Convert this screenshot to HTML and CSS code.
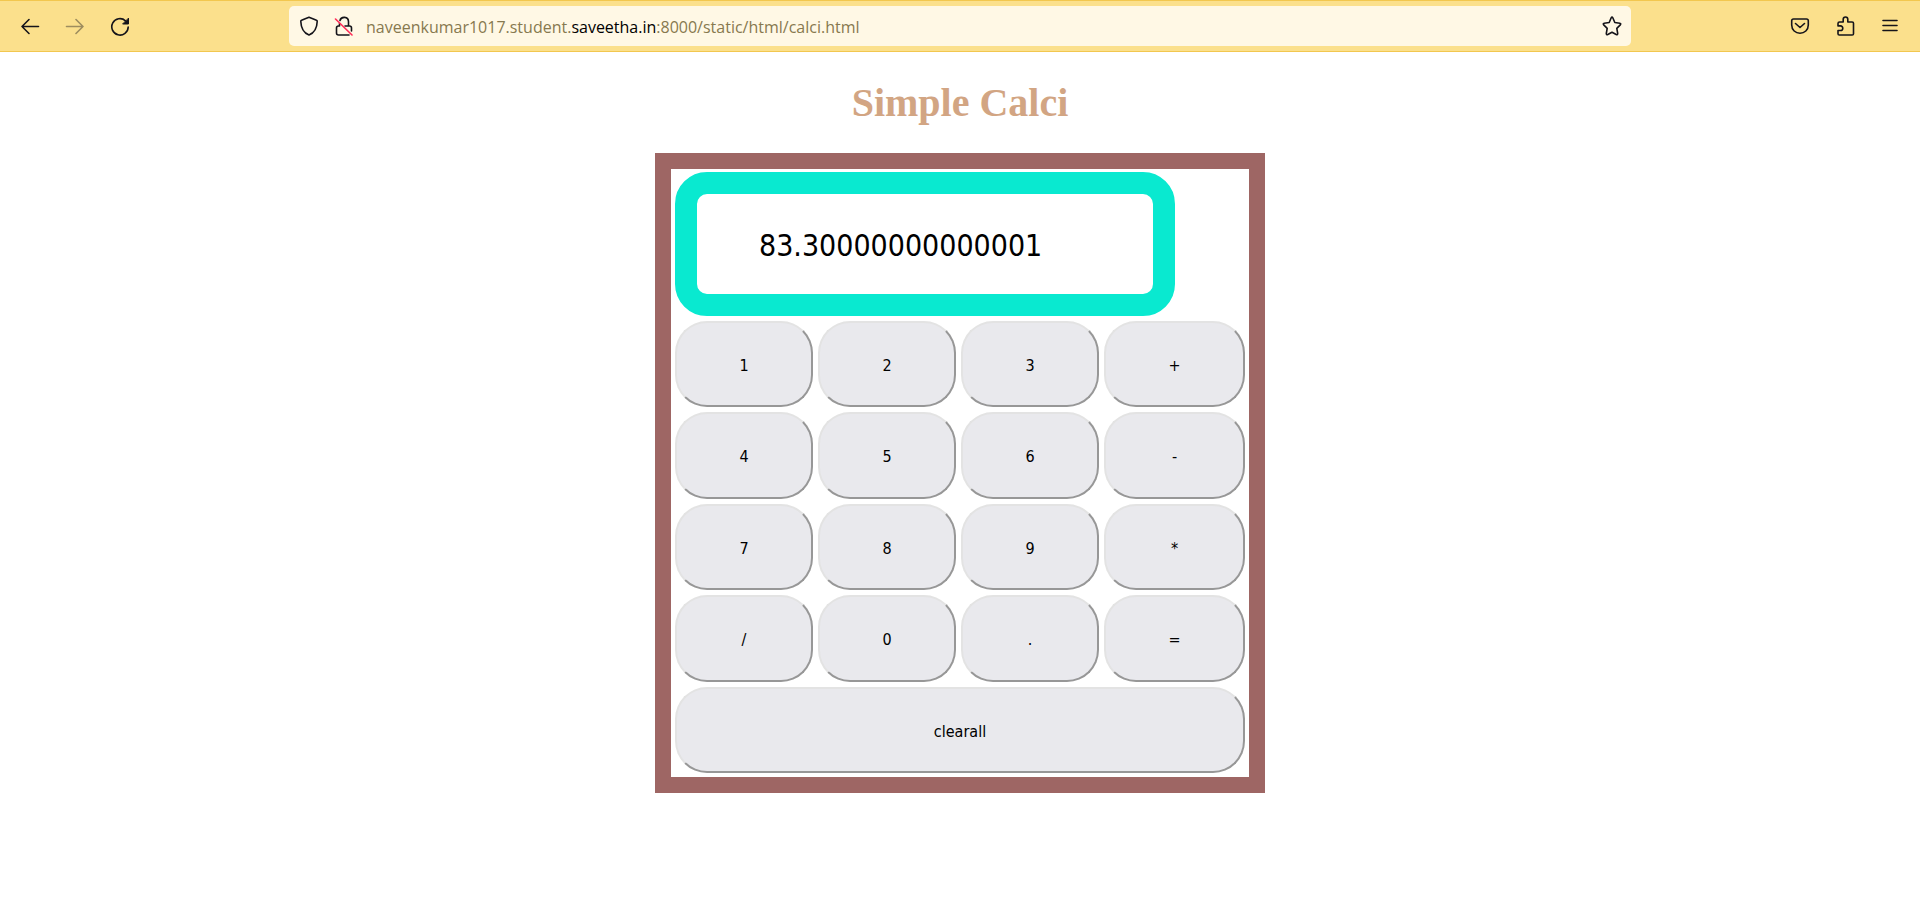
FILE: index.html
```html
<!DOCTYPE html>
<html lang="en">
<head>
<meta charset="utf-8">
<title>Simple Calci</title>
<link rel="stylesheet" href="styles.css">
</head>
<body>
<header class="toolbar">
  <nav class="nav" aria-label="Navigation">
    <button class="tool" type="button" aria-label="Back"><svg class="icon" viewBox="0 0 20 20"><path d="M18.500 10.500H2M9 3.500L2 10.500l7 7"/></svg></button>
    <button class="tool" type="button" aria-label="Forward" disabled><svg class="icon" viewBox="0 0 20 20"><path d="M1.500 10.500H18M11 3.500L18 10.500l-7 7"/></svg></button>
    <button class="tool" type="button" aria-label="Reload"><svg class="icon" viewBox="0 0 20 20"><path d="M18.200 11A8.200 8.200 0 1 1 15.500 4.800"/><path class="solid" d="M18.500 2.500V8H13Z"/></svg></button>
  </nav>
  <div class="address">
    <button class="tool" type="button" aria-label="Tracking protection"><svg class="icon" viewBox="0 0 20 20"><path d="M10 1.200L17.500 4.300Q18.300 4.600 18.200 5.500C18 12 15 17 10 19C5 17 2 12 1.800 5.500Q1.700 4.600 2.500 4.300Z"/></svg></button>
    <button class="tool" type="button" aria-label="Connection is not secure"><svg class="icon" viewBox="0 0 20 20"><path d="M6 4.500C7 .2 14.500 0 14.500 5.800V9.500M5.500 7.500V10H4.500Q2.500 10 2.500 12V17Q2.500 19 4.500 19H15M11 10H15.500Q17.500 10 17.500 12V15"/><path class="strike" d="M1.500 3L18 19"/></svg></button>
    <div class="url" role="textbox" aria-label="Address" contenteditable="true" spellcheck="false">naveenkumar1017.student.<span class="host">saveetha.in</span>:8000/static/html/calci.html</div>
    <button class="tool" type="button" aria-label="Bookmark"><svg class="icon" viewBox="0 0 20 20"><path d="M9.200 1.800Q10 .4 10.800 1.800L12.800 6.500L17.800 7.200Q19.400 7.600 18.300 8.900L14.800 12.400L15.700 17.500Q15.700 19.100 14.200 18.500L10 16.200L5.800 18.500Q4.300 19.100 4.300 17.500L5.200 12.400L1.700 8.900Q.6 7.600 2.200 7.200L7.200 6.500Z"/></svg></button>
  </div>
  <div class="actions">
    <button class="tool" type="button" aria-label="Save to Pocket"><svg class="icon" viewBox="0 0 20 20"><path d="M3.500 3H16.500Q18.300 3 18.300 4.800V9C18.300 14 14.500 17.200 10 17.200S1.700 14 1.700 9V4.800Q1.700 3 3.500 3ZM5.500 7.500L10 11.500L14.500 7.500"/></svg></button>
    <button class="tool" type="button" aria-label="Extensions"><svg class="icon" viewBox="0 0 20 20"><path d="M4.500 6H8.200V3.300A2.300 2.300 0 0 1 12.800 3.300V6H17.200Q18.500 6 18.500 7.300V17.700Q18.500 19 17.200 19H4.300Q3 19 3 17.700V14.500H5.500A2.300 2.300 0 0 0 5.500 9.900H3V7.500Q3 6 4.500 6Z"/></svg></button>
    <button class="tool" type="button" aria-label="Menu"><svg class="icon" viewBox="0 0 20 20"><path d="M3 4.500H17M3 9.500H17M3 14.500H17"/></svg></button>
  </div>
</header>
<main class="page">
  <h1 class="title">Simple Calci</h1>
  <form class="calculator">
    <input class="display" type="text" aria-label="Result" value="83.30000000000001">
    <div class="keys">
      <button class="key" type="button">1</button>
      <button class="key" type="button">2</button>
      <button class="key" type="button">3</button>
      <button class="key" type="button">+</button>
      <button class="key" type="button">4</button>
      <button class="key" type="button">5</button>
      <button class="key" type="button">6</button>
      <button class="key" type="button">-</button>
      <button class="key" type="button">7</button>
      <button class="key" type="button">8</button>
      <button class="key" type="button">9</button>
      <button class="key" type="button">*</button>
      <button class="key" type="button">/</button>
      <button class="key" type="button">0</button>
      <button class="key" type="button">.</button>
      <button class="key" type="button">=</button>
      <button class="key key-wide" type="button">clearall</button>
    </div>
  </form>
</main>
</body>
</html>
```
FILE: styles.css
```css
* { box-sizing: border-box; }

body {
  margin: 0;
  background: #fff;
  font-family: "Liberation Serif", serif;
}

/* Browser toolbar */
.toolbar {
  display: grid;
  grid-template-columns: 289px 1fr 289px;
  align-items: center;
  padding: 5px 0;
  background: #fbe08c;
  border-top: 1px solid #f2c74f;
  border-bottom: 1px solid #f2c74f;
}

.nav,
.actions,
.address {
  display: flex;
  align-items: center;
}

.nav {
  gap: 25px;
  padding-left: 20px;
}

.actions {
  justify-content: flex-end;
  gap: 25px;
  padding-right: 20px;
}

.address {
  gap: 15px;
  height: 40px;
  padding: 0 9px 0 10px;
  background: #fff8e5;
  border-radius: 5px;
}

.tool {
  display: flex;
  padding: 0;
  border: 0;
  background: none;
  color: #15141a;
}

.tool:disabled { opacity: 0.4; }

.icon {
  width: 20px;
  height: 20px;
  fill: none;
  stroke: currentColor;
  stroke-width: 1.6;
  stroke-linecap: round;
  stroke-linejoin: round;
}

.icon .solid { fill: currentColor; stroke-width: 1; }
.icon .strike { stroke: #ff2a55; }

.url {
  flex: 1;
  margin-left: -3px;
  padding-top: 2px;
  overflow: hidden;
  white-space: nowrap;
  font: 16px/24px "Open Sans", "Noto Sans", sans-serif;
  color: #87794f;
}

.host { color: #000; }

/* Calculator page */
.page {
  display: flex;
  flex-direction: column;
  align-items: center;
}

.title {
  margin: 28px 0;
  font-size: 40px;
  line-height: 45px;
  color: #d2a583;
}

.calculator {
  display: flex;
  flex-direction: column;
  align-items: flex-start;
  gap: 5px;
  padding: 3px 4px 4px;
  border: 16px solid #9e6664;
}

.display {
  width: 500px;
  padding: 32px 62px 28px;
  border: 22px solid #09e9d0;
  border-radius: 32px;
  background: #fff;
  color: #000;
  font: 30px/40px "DejaVu Sans Condensed", "Noto Sans", sans-serif;
}

.keys {
  display: grid;
  grid-template-columns: repeat(3, 138px) 141px;
  grid-auto-rows: 86px 87px;
  gap: 5px;
}

.key {
  padding: 3px 0 0;
  border: 2px solid;
  border-color: #e3e3e3 #979797 #979797 #e3e3e3;
  border-radius: 32px;
  background: #e9e9ed;
  color: #000;
  font: 16px/24px "DejaVu Sans Condensed", "Noto Sans", sans-serif;
}

.key-wide { grid-column: 1 / -1; }
```
